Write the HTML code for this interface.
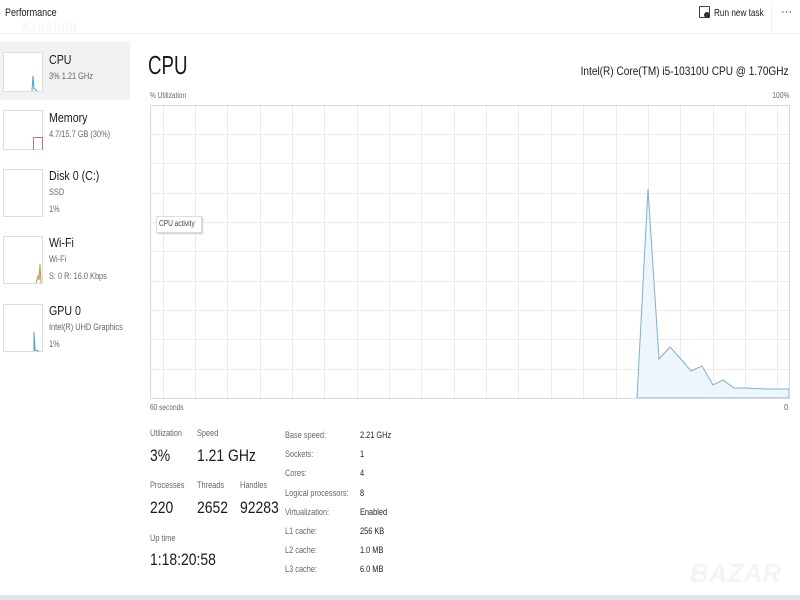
<!DOCTYPE html>
<html><head><style>
body{margin:0;width:800px;height:600px;background:#fff;font-family:"Liberation Sans",sans-serif;color:#1a1a1a;position:relative;overflow:hidden}
.a{position:absolute;white-space:nowrap}
.c{transform:scaleX(0.82);transform-origin:0 0}
.r{transform:scaleX(0.84);transform-origin:100% 0}
.s{font-size:9px;color:#666}
.big{font-size:17px;color:#1a1a1a}
</style></head><body>
<div class="a c" style="left:5px;top:7px;font-size:11px">Performance</div>
<div class="a c" style="left:22px;top:17px;font-size:17px;font-weight:bold;color:#f6f7f9">Krasimir</div>
<div class="a" style="left:0;top:33px;width:800px;height:1px;background:#eee"></div>
<div class="a" style="left:699px;top:6px;width:9px;height:10px;border:1px solid #444;border-radius:1px"></div>
<div class="a" style="left:704px;top:12px;width:6px;height:6px;border-radius:50%;background:#333"></div>
<div class="a c" style="left:714px;top:8px;font-size:10px">Run new task</div>
<div class="a" style="left:771px;top:2px;width:1px;height:30px;background:#eee"></div>
<div class="a" style="left:781px;top:6px;font-size:11px">···</div>

<div class="a" style="left:0;top:42px;width:130px;height:58px;background:#f2f2f2"></div>
<div class="a" style="left:3px;top:52px;width:38px;height:38px;border:1px solid #ddd;background:#fff"></div>
<svg class="a" style="left:3px;top:52px" width="40" height="40"><path d="M29 39 L30 24 L31 36 L34 39" fill="none" stroke="#4a9fd0"/></svg>
<div class="a" style="left:3px;top:110px;width:38px;height:38px;border:1px solid #ddd"></div>
<div class="a" style="left:33px;top:137px;width:8px;height:12px;border:1px solid #b36fb3;border-bottom:none"></div>
<div class="a" style="left:3px;top:169px;width:38px;height:46px;border:1px solid #ddd"></div>
<div class="a" style="left:3px;top:236px;width:38px;height:46px;border:1px solid #ddd"></div>
<svg class="a" style="left:3px;top:236px" width="40" height="48"><path d="M33 47 L35 40 L36 44 L37 28 L38 47" fill="none" stroke="#c69050"/></svg>
<div class="a" style="left:3px;top:304px;width:38px;height:46px;border:1px solid #ddd"></div>
<svg class="a" style="left:3px;top:304px" width="40" height="48"><path d="M31 47 L31 28 L32 46 L36 47" fill="none" stroke="#4a9fd0"/></svg>

<div class="a c" style="left:49px;top:52px;font-size:13px">CPU</div>
<div class="a s c" style="left:49px;top:71px">3% 1.21 GHz</div>
<div class="a c" style="left:49px;top:110px;font-size:13px">Memory</div>
<div class="a s c" style="left:49px;top:129px">4.7/15.7 GB (30%)</div>
<div class="a c" style="left:49px;top:168px;font-size:13px">Disk 0 (C:)</div>
<div class="a s c" style="left:49px;top:187px">SSD</div>
<div class="a s c" style="left:49px;top:204px">1%</div>
<div class="a c" style="left:49px;top:235px;font-size:13px">Wi-Fi</div>
<div class="a s c" style="left:49px;top:254px">Wi-Fi</div>
<div class="a s c" style="left:49px;top:271px">S: 0 R: 16.0 Kbps</div>
<div class="a c" style="left:49px;top:303px;font-size:13px">GPU 0</div>
<div class="a s c" style="left:49px;top:322px">Intel(R) UHD Graphics</div>
<div class="a s c" style="left:49px;top:339px">1%</div>

<div class="a" style="left:148px;top:50px;font-size:26px;transform:scaleX(0.72);transform-origin:0 0">CPU</div>
<div class="a r" style="right:11px;top:64px;font-size:12px">Intel(R) Core(TM) i5-10310U CPU @ 1.70GHz</div>
<div class="a c" style="left:150px;top:91px;font-size:8px;color:#666">% Utilization</div>
<div class="a r" style="right:11px;top:91px;font-size:8px;color:#666">100%</div>

<svg class="a" style="left:150px;top:105px" width="640" height="294">
<g stroke="#ececec" stroke-width="1">
<path d="M0 29.5H640M0 58.5H640M0 88.5H640M0 117.5H640M0 146.5H640M0 176.5H640M0 205.5H640M0 234.5H640M0 264.5H640"/>
<path d="M13.5 0V293M45.5 0V293M77.5 0V293M110.5 0V293M142.5 0V293M174.5 0V293M207.5 0V293M239.5 0V293M271.5 0V293M304.5 0V293M336.5 0V293M368.5 0V293M401.5 0V293M433.5 0V293M466.5 0V293M498.5 0V293M530.5 0V293M563.5 0V293M595.5 0V293M627.5 0V293"/>
</g>
<path d="M487 293 L498 84 L509 254 L520 242 L530 253 L541 266 L552 261 L563 280 L573 275 L584 283 L595 283 L616 284 L639 284 L639 293Z" fill="#eef5fb" stroke="#7fb2cc" stroke-width="1"/>
<rect x="0.5" y="0.5" width="639" height="293" fill="none" stroke="#d8d8d8"/>
</svg>
<div class="a" style="left:156px;top:216px;width:44px;height:15px;background:#fff;border:1px solid #ddd;box-shadow:1px 1px 1px #ccc"></div>
<div class="a c" style="left:159px;top:219px;font-size:8px;color:#444">CPU activity</div>
<div class="a c" style="left:150px;top:403px;font-size:8px;color:#666">60 seconds</div>
<div class="a" style="left:784px;top:403px;font-size:8px;color:#666">0</div>

<div class="a s c" style="left:150px;top:428px">Utilization</div>
<div class="a s c" style="left:197px;top:428px">Speed</div>
<div class="a big c" style="left:150px;top:446px">3%</div>
<div class="a big c" style="left:197px;top:446px">1.21 GHz</div>
<div class="a s c" style="left:150px;top:480px">Processes</div>
<div class="a s c" style="left:197px;top:480px">Threads</div>
<div class="a s c" style="left:240px;top:480px">Handles</div>
<div class="a big c" style="left:150px;top:498px">220</div>
<div class="a big c" style="left:197px;top:498px">2652</div>
<div class="a big c" style="left:240px;top:498px">92283</div>
<div class="a s c" style="left:150px;top:533px">Up time</div>
<div class="a big c" style="left:150px;top:550px">1:18:20:58</div>

<div class="a s c" style="left:285px;top:426px;line-height:19.2px">Base speed:<br>Sockets:<br>Cores:<br>Logical processors:<br>Virtualization:<br>L1 cache:<br>L2 cache:<br>L3 cache:</div>
<div class="a c" style="left:360px;top:426px;font-size:9px;color:#222;line-height:19.2px">2.21 GHz<br>1<br>4<br>8<br>Enabled<br>256 KB<br>1.0 MB<br>6.0 MB</div>

<div class="a" style="left:690px;top:558px;font-size:26px;font-weight:bold;color:#f3f4f6;font-style:italic">BAZAR</div>
<div class="a" style="left:0;top:595px;width:800px;height:5px;background:#dfe4ee"></div>
</body></html>
